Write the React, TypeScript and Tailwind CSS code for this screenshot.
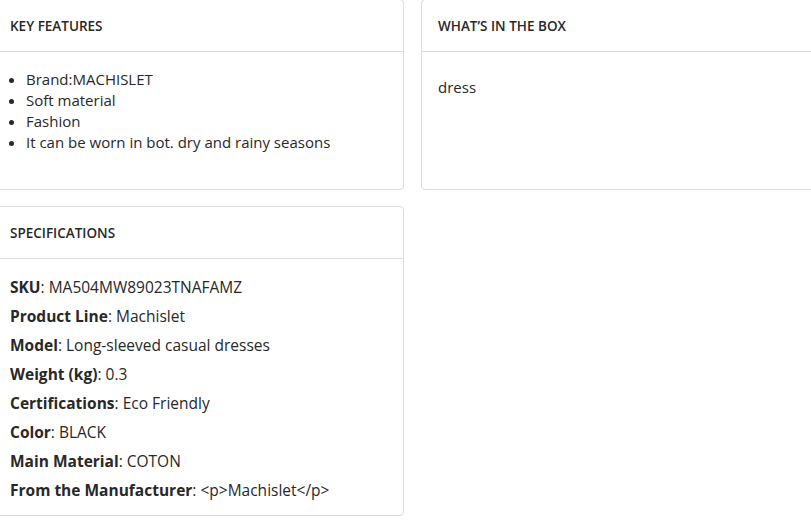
const FEATURES = [
  "Brand:MACHISLET",
  "Soft material",
  "Fashion",
  "It can be worn in bot. dry and rainy seasons",
];

const SPECS = [
  { label: "SKU", value: "MA504MW89023TNAFAMZ" },
  { label: "Product Line", value: "Machislet" },
  { label: "Model", value: "Long-sleeved casual dresses" },
  { label: "Weight (kg)", value: "0.3" },
  { label: "Certifications", value: "Eco Friendly" },
  { label: "Color", value: "BLACK" },
  { label: "Main Material", value: "COTON" },
  { label: "From the Manufacturer", value: "<p>Machislet</p>" },
];

function Card({
  title,
  children,
  className = "",
}: {
  title: string;
  children: React.ReactNode;
  className?: string;
}) {
  return (
    <section
      className={`flex flex-col rounded-[4px] border border-[#dcdcdc] bg-white ${className}`}
    >
      <header className="flex h-[52px] items-center border-b border-[#dcdcdc] px-[16px] pt-[2px]">
        <h2 className="text-[13.5px] font-semibold uppercase text-[#282828]">
          {title}
        </h2>
      </header>
      <div className="flex-1 px-[16px]">{children}</div>
    </section>
  );
}

export default function App() {
  return (
    <div className="min-h-screen overflow-hidden bg-white font-['Open_Sans',sans-serif] text-[#282828]">
      <div className="ml-[-7px] mt-[-1px] grid w-[839px] grid-cols-2 gap-x-[17px] gap-y-[16px]">
        <Card title="Key Features" className="h-[191px]">
          <ul className="list-disc pl-[16px] pt-[17px] text-[15px] leading-[21px]">
            {FEATURES.map((f) => (
              <li key={f}>{f}</li>
            ))}
          </ul>
        </Card>
        <Card title="What’s in the box" className="h-[191px]">
          <p className="pt-[25px] text-[15px] leading-[21px]">dress</p>
        </Card>
        <Card title="Specifications" className="h-[310px]">
          <div className="flex flex-col gap-[8px] pt-[18px] text-[15.5px] leading-[21px]">
            {SPECS.map((s) => (
              <p key={s.label}>
                <span className="font-bold">{s.label}</span>: {s.value}
              </p>
            ))}
          </div>
        </Card>
      </div>
    </div>
  );
}
